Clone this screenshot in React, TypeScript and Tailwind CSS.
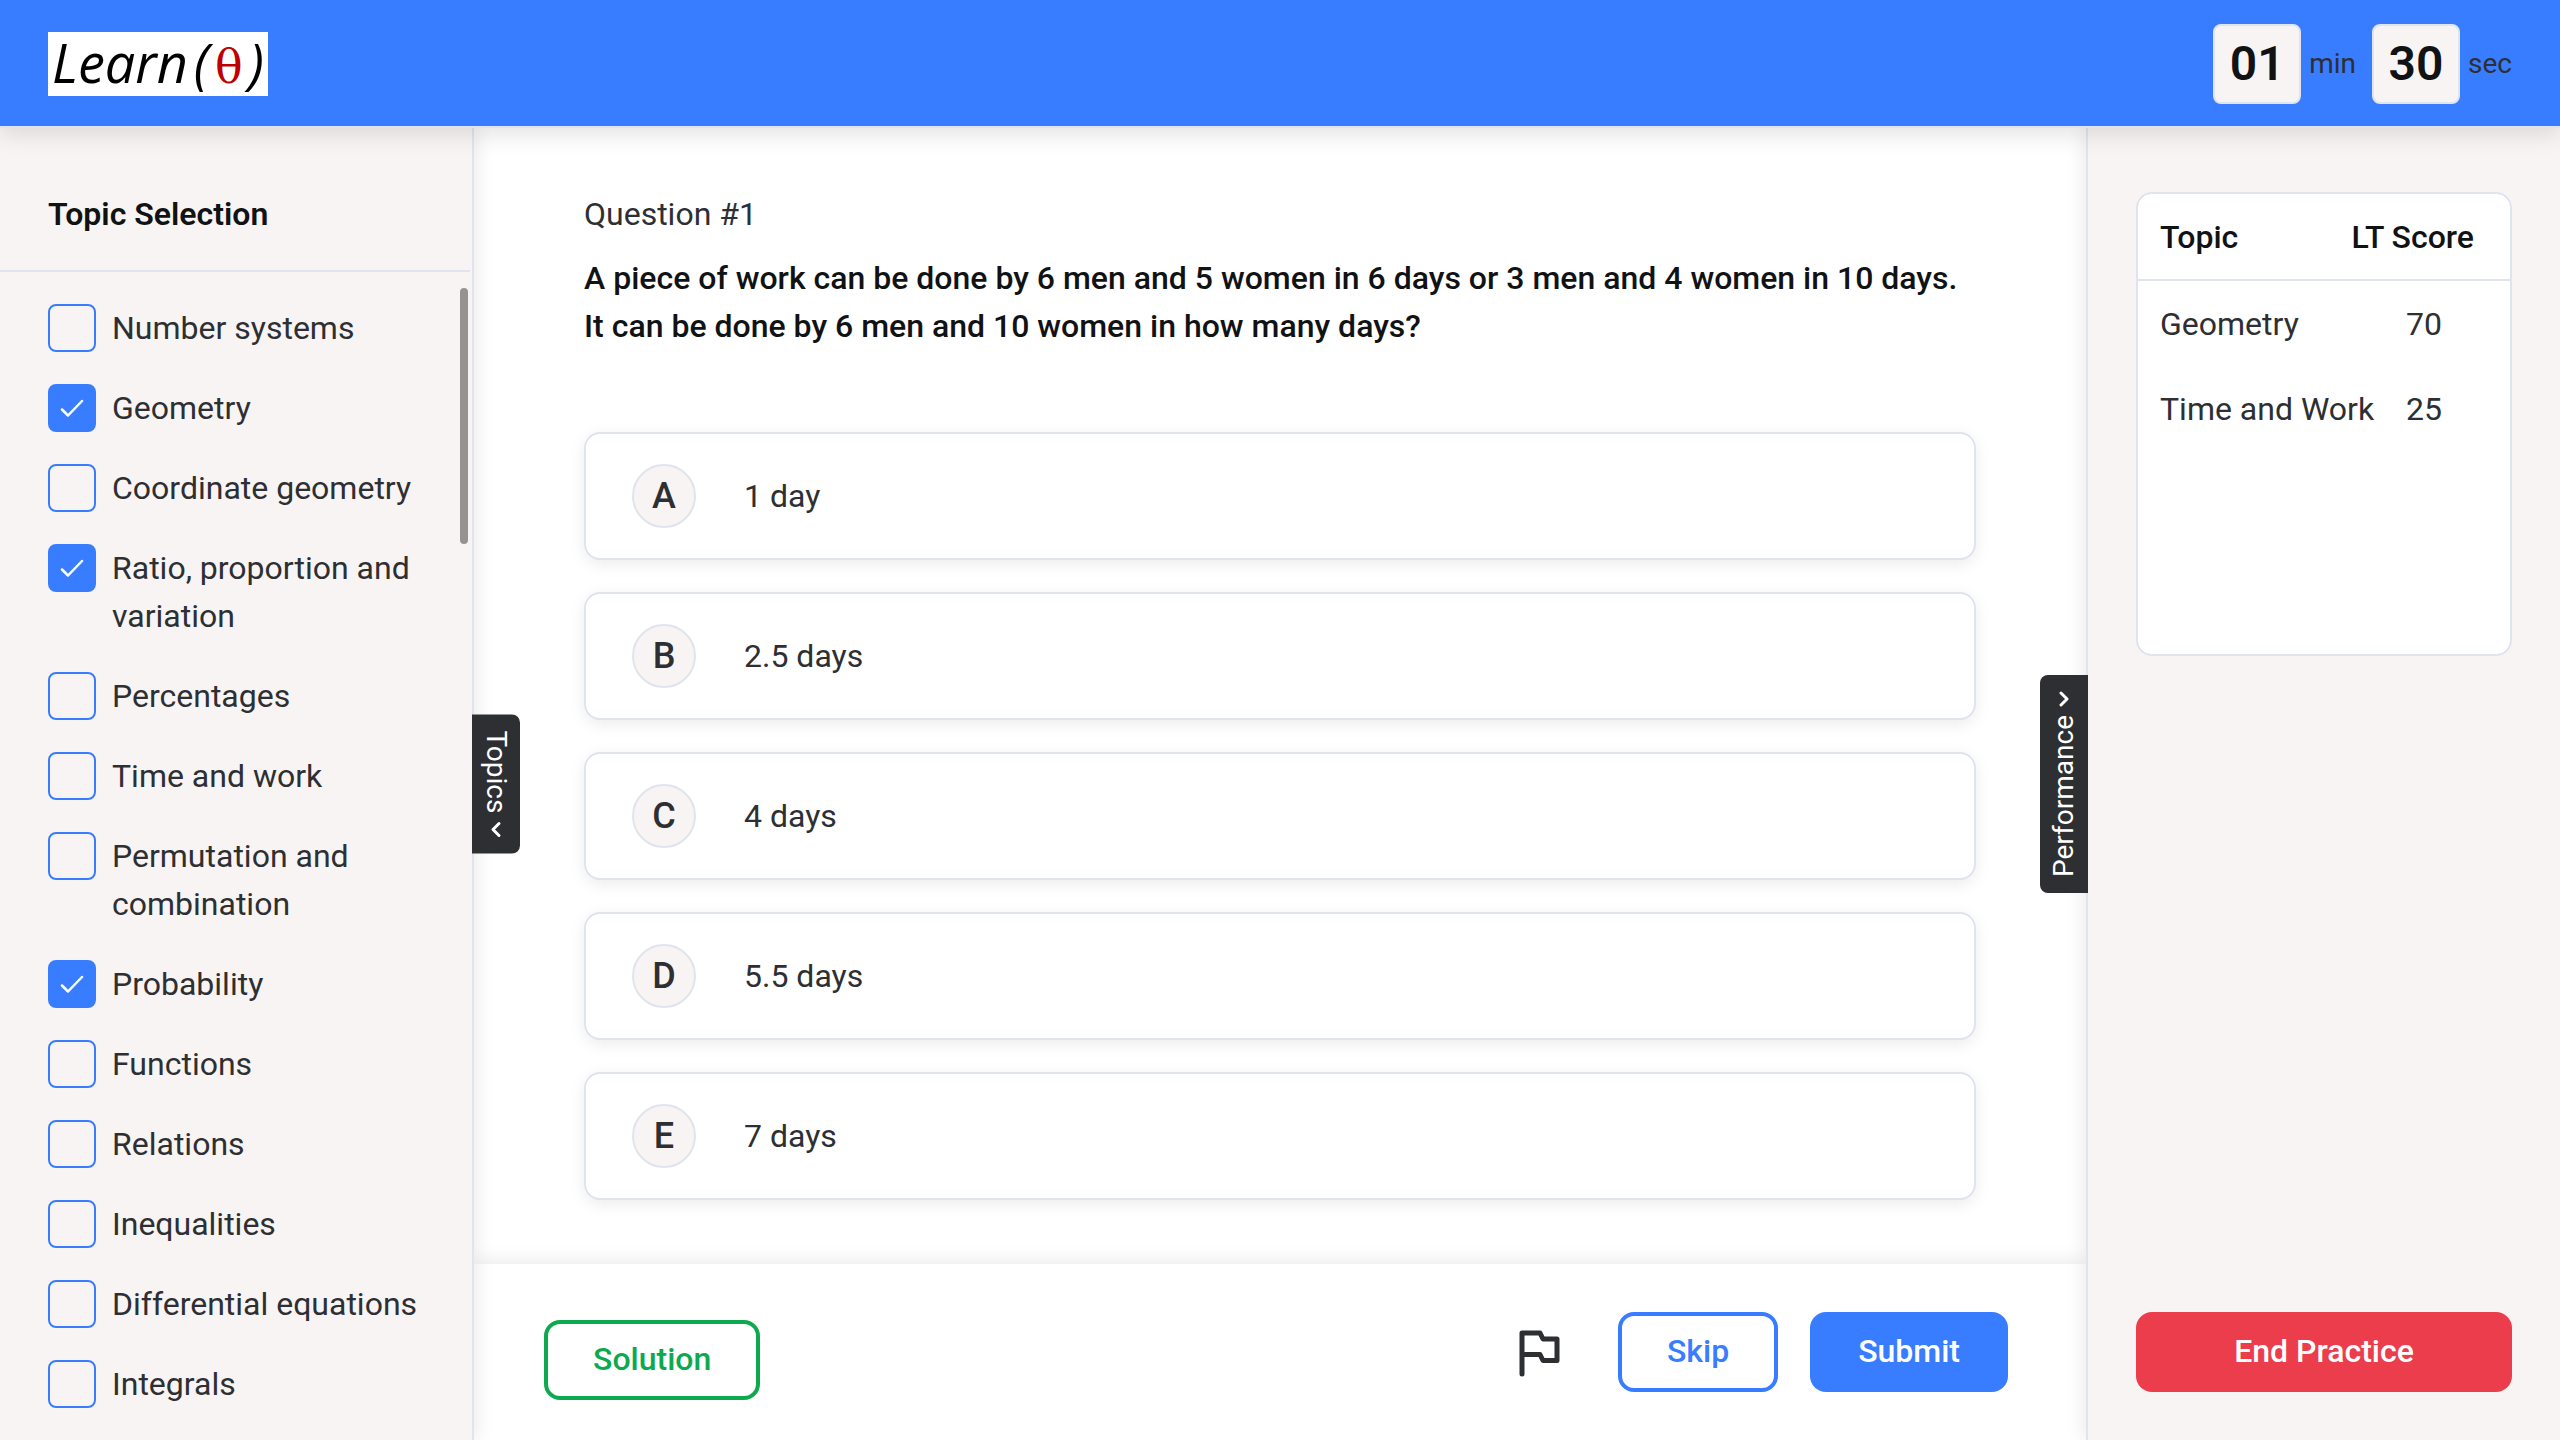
import { useState } from "react";

const TOPICS = [
  { name: "Number systems", selected: false },
  { name: "Geometry", selected: true },
  { name: "Coordinate geometry", selected: false },
  { name: "Ratio, proportion and variation", selected: true },
  { name: "Percentages", selected: false },
  { name: "Time and work", selected: false },
  { name: "Permutation and combination", selected: false },
  { name: "Probability", selected: true },
  { name: "Functions", selected: false },
  { name: "Relations", selected: false },
  { name: "Inequalities", selected: false },
  { name: "Differential equations", selected: false },
  { name: "Integrals", selected: false },
];

const OPTIONS = [
  { key: "A", text: "1 day" },
  { key: "B", text: "2.5 days" },
  { key: "C", text: "4 days" },
  { key: "D", text: "5.5 days" },
  { key: "E", text: "7 days" },
];

const SCORES = [
  { topic: "Geometry", score: 70 },
  { topic: "Time and Work", score: 25 },
];

function Logo() {
  return (
    <a
      href="#"
      className="flex h-16 w-[220px] items-baseline justify-between bg-white px-1 font-['Open_Sans',sans-serif] text-[54px] leading-[60px] text-black italic"
    >
      <span>Learn</span>
      <span>(</span>
      <span className="font-['DejaVu_Serif',serif] text-[46px] text-[#c00000] not-italic">θ</span>
      <span>)</span>
    </a>
  );
}

function TimerUnit({ value, unit }: { value: string; unit: string }) {
  return (
    <div className="flex items-center gap-2">
      <span className="flex h-20 w-[88px] items-center justify-center rounded-lg border-2 border-[#dfe4ee] bg-[#f8f4f3] text-5xl font-semibold text-[#111214]">
        {value}
      </span>
      <span className="text-[28px] leading-10">{unit}</span>
    </div>
  );
}

function Chevron() {
  return (
    <svg
      viewBox="0 0 16 16"
      className="h-4 w-4"
      fill="none"
      stroke="currentColor"
      strokeWidth="3"
      strokeLinecap="round"
      strokeLinejoin="round"
      aria-hidden="true"
    >
      <path d="M11 2 5 8l6 6" />
    </svg>
  );
}

function FlagIcon() {
  return (
    <svg
      viewBox="0 0 64 64"
      className="h-16 w-16"
      fill="none"
      stroke="currentColor"
      strokeWidth="5"
      strokeLinecap="round"
      strokeLinejoin="round"
      aria-hidden="true"
    >
      <path d="M16 54V13h18l3 6h14v21.500H37l-3-6H16" />
    </svg>
  );
}

function TopicItem({ name, selected }: { name: string; selected: boolean }) {
  const [checked, setChecked] = useState(selected);
  return (
    <li>
      <label className="flex items-start gap-4">
        <span className="grid shrink-0 place-items-center">
          <input
            type="checkbox"
            checked={checked}
            onChange={() => setChecked(!checked)}
            className="col-start-1 row-start-1 h-12 w-12 appearance-none rounded-lg border-2 border-[#387dff] checked:bg-[#387dff]"
          />
          {checked && (
            <svg
              viewBox="0 0 24 18"
              className="pointer-events-none col-start-1 row-start-1 h-[18px] w-6 text-white"
              fill="none"
              stroke="currentColor"
              strokeWidth="2.500"
              strokeLinecap="round"
              strokeLinejoin="round"
              aria-hidden="true"
            >
              <path d="M2 10.500 8 16.500 22 2" />
            </svg>
          )}
        </span>
        <span>{name}</span>
      </label>
    </li>
  );
}

export default function App() {
  return (
    <div className="flex min-h-screen flex-col bg-white font-['Roboto',sans-serif] text-[32px] leading-[48px] text-[#2d2f33]">
      <header className="relative z-30 flex items-center justify-between border-b-2 border-[#dfe4ee] bg-[#387dff] px-12 pt-6 pb-[22px] shadow-[0_8px_20px_rgba(0,0,0,0.1)]">
        <Logo />
        <div className="flex gap-4">
          <TimerUnit value="01" unit="min" />
          <TimerUnit value="30" unit="sec" />
        </div>
      </header>

      <div className="flex flex-1">
        <aside className="relative z-20 w-[474px] shrink-0 border-r-2 border-[#dfe4ee] bg-[#f8f4f3] shadow-[4px_0_16px_rgba(0,0,0,0.08)]">
          <div className="mr-0.5 border-b-2 border-[#dfe4ee] px-12 pt-[62px] pb-8">
            <h2 className="font-semibold text-[#111214]">Topic Selection</h2>
          </div>
          <div className="relative">
            <ul className="flex flex-col gap-8 py-8 pr-10 pl-12">
              {TOPICS.map((t) => (
                <TopicItem key={t.name} name={t.name} selected={t.selected} />
              ))}
            </ul>
            <div className="absolute top-4 right-1 h-64 w-2 rounded-full bg-[#949391]" />
          </div>
          <button
            type="button"
            className="absolute top-1/2 -right-12 flex w-12 -translate-y-1/2 items-center gap-2 rounded-r-lg bg-[#2d2f33] pt-4 pb-4 text-[28px] text-white [writing-mode:vertical-rl]"
          >
            Topics
            <Chevron />
          </button>
        </aside>

        <main className="flex min-w-0 flex-1 flex-col">
          <section className="flex-1 px-[110px] pt-[62px] pb-16">
            <h1>Question #1</h1>
            <p className="mt-4 font-medium text-[#111214]">
              A piece of work can be done by 6 men and 5 women in 6 days or 3 men and 4 women in 10 days. It can be
              done by 6 men and 10 women in how many days?
            </p>
            <div className="mt-[82px] flex flex-col gap-8">
              {OPTIONS.map((o) => (
                <button
                  key={o.key}
                  type="button"
                  className="flex items-center gap-12 rounded-2xl border-2 border-[#dfe4ee] bg-white px-[46px] py-[30px] text-left shadow-[0_4px_16px_rgba(0,0,0,0.08)]"
                >
                  <span className="flex h-16 w-16 items-center justify-center rounded-full border-2 border-[#dfe4ee] bg-[#f8f4f3] text-4xl font-medium">
                    {o.key}
                  </span>
                  <span>{o.text}</span>
                </button>
              ))}
            </div>
          </section>

          <footer className="flex justify-between bg-white pt-12 pr-[78px] pb-10 pl-[70px] shadow-[0_-4px_16px_rgba(0,0,0,0.08)]">
            <div className="flex items-end pt-2">
              <button
                type="button"
                className="h-20 rounded-2xl border-4 border-[#0da94f] px-[45px] pb-0.5 font-medium text-[#0da94f]"
              >
                Solution
              </button>
            </div>
            <div className="flex items-start gap-8 pb-2">
              <button type="button" aria-label="Flag question" className="flex h-20 items-center px-4">
                <FlagIcon />
              </button>
              <button
                type="button"
                className="h-20 rounded-2xl border-4 border-[#387dff] px-[45px] pb-0.5 font-medium text-[#387dff]"
              >
                Skip
              </button>
              <button type="button" className="h-20 rounded-2xl bg-[#387dff] px-12 pb-0.5 font-medium text-white">
                Submit
              </button>
            </div>
          </footer>
        </main>

        <aside className="relative z-20 flex w-[474px] shrink-0 flex-col justify-between border-l-2 border-[#dfe4ee] bg-[#f8f4f3] px-12 pt-16 pb-12 shadow-[-4px_0_16px_rgba(0,0,0,0.08)]">
          <div className="min-h-[464px] overflow-hidden rounded-2xl border-2 border-[#dfe4ee] bg-white">
            <table className="w-full border-collapse">
              <thead>
                <tr className="h-[86px] border-b-2 border-[#dfe4ee] text-[#111214]">
                  <th colSpan={2} className="pr-9 pl-[22px] font-medium">
                    <div className="flex justify-between">
                      <span>Topic</span>
                      <span>LT Score</span>
                    </div>
                  </th>
                </tr>
              </thead>
              <tbody>
                {SCORES.map((s) => (
                  <tr key={s.topic} className="h-[86px]">
                    <td className="pl-[22px] whitespace-nowrap">{s.topic}</td>
                    <td className="pr-[68px] text-right">{s.score}</td>
                  </tr>
                ))}
              </tbody>
            </table>
          </div>
          <button type="button" className="h-20 rounded-2xl bg-[#ec3d4d] pb-0.5 font-medium text-white">
            End Practice
          </button>
          <button
            type="button"
            className="absolute top-1/2 -left-12 flex w-12 -translate-y-1/2 rotate-180 items-center gap-2 rounded-r-lg bg-[#2d2f33] pt-4 pb-4 text-[28px] text-white [writing-mode:vertical-rl]"
          >
            Performance
            <Chevron />
          </button>
        </aside>
      </div>
    </div>
  );
}
